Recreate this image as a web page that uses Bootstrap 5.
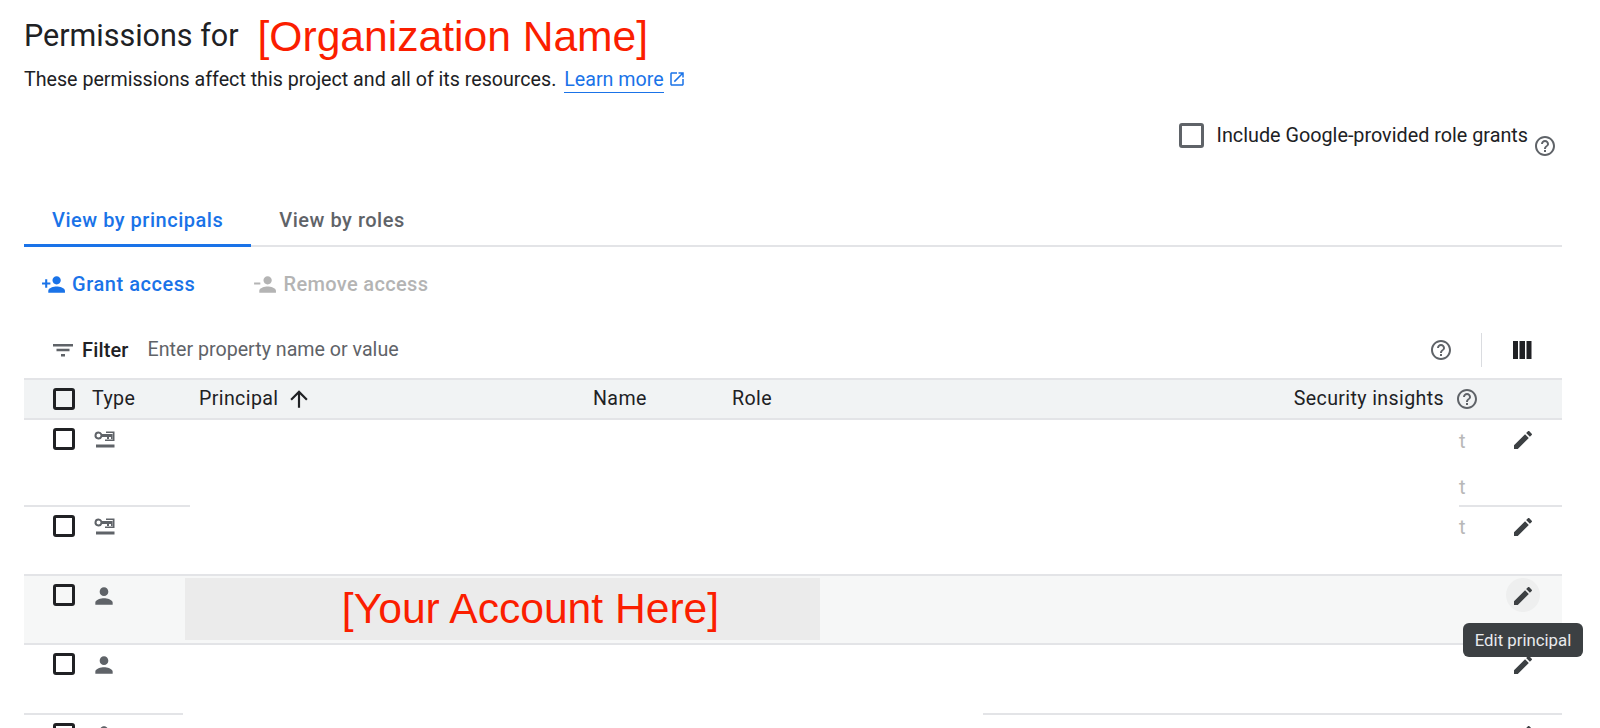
<!doctype html>
<html lang="en">
<head>
<meta charset="utf-8">
<title>Permissions</title>
<link href="https://cdn.jsdelivr.net/npm/bootstrap@5.3.0/dist/css/bootstrap.min.css" rel="stylesheet">
<style>
html,body{height:728px;overflow:hidden;background:#fff}
body{font-family:Roboto,"Liberation Sans",sans-serif;color:#202124;font-size:19.6px}
svg{display:block;fill:currentColor;flex:none}
.pg{margin:0 38px 0 24px;position:relative;height:728px;overflow:visible}
.head-row{padding-top:14px;height:56px;gap:19px}
.ttl{font-size:30.5px;line-height:42px;font-weight:400;margin:2px 0 0;color:#202124}
.redact{font-family:"Liberation Sans",Arial,sans-serif;color:#fb1e00;font-size:42.6px;line-height:42px}
.head-row .redact{margin-top:1px}
.sub{margin:12px 0 0;font-size:19.65px;line-height:24px;white-space:nowrap}
.sub a{color:#1a73e8;text-decoration:none;border-bottom:1px solid #1a73e8;margin-left:3px;display:inline-block;line-height:24px}
.sub svg{display:inline-block;width:18px;height:18px;color:#1a73e8;margin-left:4px;vertical-align:-2px}
.opt{margin-top:30px;height:35px;padding-right:5px}
.opt-text{line-height:25px;margin-left:13px;font-size:19.8px}
.box.form-check-input{width:22px;height:22px;margin:0;border:3px solid #202124;border-radius:3px;background-color:transparent;flex:none}
.box.big.form-check-input{width:25px;height:25px;border-color:#5f6368}
.hlp{width:24px;height:24px;color:#5f6368}
.opt .hlp{margin:11px 0 0 5px}
.tabbar{margin-top:38px;height:51px;border-bottom:2px solid #e3e4e7}
.tabbar .nav-link{padding:0 28px;height:51px;line-height:49px;color:#5f6368;font-size:20px;letter-spacing:.52px;font-weight:480;margin-bottom:-2px;border-bottom:3px solid transparent}
.tabbar .nav-link.active{color:#1a73e8;border-bottom-color:#1a73e8}
.acts{margin-top:17px;height:40px;padding-left:17px;gap:57px}
.act.btn{padding:0;border:0;font-size:20px;letter-spacing:.55px;font-weight:480;color:#1a73e8;gap:6px;display:flex;align-items:center}
.act.btn.off,.act.btn:disabled{color:#b4b4b4;opacity:1;letter-spacing:.35px}
.act svg{width:25px;height:25px}
.flt{margin-top:24px;margin-bottom:6px;height:44px;padding-left:27px;color:#202124}
.flt-l{font-weight:500;margin-left:7px;font-size:20px;letter-spacing:.15px}
.flt-in{border:0;outline:0;margin-left:19px;flex:1;font-size:19.65px;color:#5f6368;padding:0;background:transparent;font-family:inherit}
.flt-in::placeholder{color:#5f6368;opacity:1}
.flt .hlp{margin-right:28px}
.vr-l{width:1px;height:34px;background:#dadce0;margin-right:28px}
.cols{width:24px;height:24px;margin-right:28px}
.thead{height:42px;background:#f1f3f4;border-top:2px solid #e3e4e7;border-bottom:2px solid #e3e4e7;padding-left:29px;font-weight:430;font-size:19.6px;letter-spacing:.38px}
.thead .c{white-space:nowrap}
.c-type{margin-left:17px;width:107px}
.c-prin{width:394px}
.c-name{width:139px}
.c-role{flex:1}
.thead svg.arr{width:26px;height:26px;color:#202124;margin-left:8px}
.c-sec{margin-right:4px}
.thead .hlp{margin-right:83px;margin-left:7px}
.trow{display:flex;align-items:stretch;position:relative}
.tl{padding:8px 0 0 29px;display:flex;gap:17px;flex:none;width:166px}
.tm{flex:1;min-width:0}
.tr{width:103px;flex:none;position:relative}
.h87{height:87px}.h69{height:69px}.h70{height:70px}
.ln{border-bottom:2px solid #e3e4e7}
.pic{width:24px;height:24px;color:#5f6368}
.pic.pu{width:26px;height:26px;margin:-1px 0 0 -1px}
.tt{color:#b8b8b8;font-size:20px;line-height:22px;position:absolute;left:0}
.tt-a{top:10px}.tt-b{top:56px}.tt-c{top:9px}
.edit{width:24px;height:24px;color:#3c4043;position:absolute;left:52px;top:8px}
.edit.far{left:528px}
.hov{position:absolute;left:47px;top:2px;width:34px;height:34px;border-radius:50%;background:#eeefef}
.sel{background:#f6f7f7}
.acct{margin:2px 0 3px -5px;width:635px;height:62px;background:#ebebeb;display:flex;align-items:center;justify-content:center}
.acct .redact{margin:-2px 0 0 56px;white-space:nowrap}
.w159{width:159px}
.w579{width:579px}
.tipx{position:absolute;left:1439px;top:623px;width:120px;height:34px;border-radius:6px;background:#3c4043;color:#e8eaed;font-size:16.8px;line-height:34px;text-align:center;z-index:5}
</style>
</head>
<body>
<main class="pg">
  <div class="d-flex align-items-center head-row">
    <h1 class="ttl">Permissions for</h1>
    <span class="redact">[Organization Name]</span>
  </div>
  <p class="sub">These permissions affect this project and all of its resources. <a href="#">Learn more</a><svg viewBox="0 0 24 24"><path d="M19 19H5V5h7V3H5c-1.11 0-2 .9-2 2v14c0 1.1.89 2 2 2h14c1.1 0 2-.9 2-2v-7h-2v7zM14 3v2h3.59l-9.83 9.83 1.41 1.41L19 6.41V10h2V3h-7z"/></svg></p>

  <div class="d-flex justify-content-end align-items-start opt">
    <input class="form-check-input box big" type="checkbox" aria-label="Include Google-provided role grants">
    <span class="opt-text">Include Google-provided role grants</span>
    <svg class="hlp" viewBox="0 0 24 24"><use href="#h"/></svg>
  </div>

  <nav class="nav tabbar">
    <a class="nav-link active" href="#">View by principals</a>
    <a class="nav-link" href="#">View by roles</a>
  </nav>

  <div class="d-flex align-items-center acts">
    <button class="btn act" type="button"><svg viewBox="0 0 24 24"><path d="M15 12c2.21 0 4-1.79 4-4s-1.79-4-4-4-4 1.79-4 4 1.79 4 4 4zm-9-2V7H4v3H1v2h3v3h2v-3h3v-2H6zm9 4c-2.67 0-8 1.34-8 4v2h16v-2c0-2.66-5.33-4-8-4z"/></svg>Grant access</button>
    <button class="btn act off" type="button" disabled><svg viewBox="0 0 24 24"><path d="M15 12c2.21 0 4-1.79 4-4s-1.79-4-4-4-4 1.79-4 4 1.79 4 4 4zM2 10h6v2H2zm13 4c-2.67 0-8 1.34-8 4v2h16v-2c0-2.66-5.33-4-8-4z"/></svg>Remove access</button>
  </div>

  <div class="d-flex align-items-center flt">
    <svg width="24" height="24" viewBox="0 0 24 24"><path fill="#5f6368" d="M10 18.500h4v-2.500h-4v2.500zM2 6v2.500h20V6H2zm3.500 7.200h13v-2.500h-13v2.500z"/></svg>
    <span class="flt-l">Filter</span>
    <input class="flt-in" type="text" placeholder="Enter property name or value" aria-label="Filter">
    <svg class="hlp" viewBox="0 0 24 24"><use href="#h"/></svg>
    <span class="vr-l"></span>
    <svg class="cols" viewBox="0 0 24 24"><path d="M3 3h5v18H3zM9.500 3H15v18H9.500zM16.500 3h5v18h-5z"/></svg>
  </div>

  <div class="d-flex align-items-center thead">
    <input class="form-check-input box" type="checkbox" aria-label="Select all">
    <span class="c c-type">Type</span>
    <span class="c c-prin d-flex align-items-center">Principal<svg class="arr" viewBox="0 0 24 24"><path d="M4 12l1.41 1.41L11 7.830V20h2V7.830l5.580 5.590L20 12l-8-8-8 8z"/></svg></span>
    <span class="c c-name">Name</span>
    <span class="c c-role">Role</span>
    <span class="c c-sec">Security insights</span>
    <svg class="hlp" viewBox="0 0 24 24"><use href="#h"/></svg>
  </div>

  <div class="trow h87">
    <div class="tl ln"><input class="form-check-input box" type="checkbox" aria-label="Select row"><svg class="pic" viewBox="0 0 24 24"><use href="#k"/></svg></div>
    <div class="tm"></div>
    <div class="tr ln"><span class="tt tt-a">t</span><span class="tt tt-b">t</span><svg class="edit" viewBox="0 0 24 24"><use href="#p"/></svg></div>
  </div>
  <div class="trow h69 ln">
    <div class="tl"><input class="form-check-input box" type="checkbox" aria-label="Select row"><svg class="pic" viewBox="0 0 24 24"><use href="#k"/></svg></div>
    <div class="tm"></div>
    <div class="tr"><span class="tt tt-c">t</span><svg class="edit" viewBox="0 0 24 24"><use href="#p"/></svg></div>
  </div>
  <div class="trow h69 ln sel">
    <div class="tl"><input class="form-check-input box" type="checkbox" aria-label="Select row"><svg class="pic pu" viewBox="0 0 24 24"><use href="#u"/></svg></div>
    <div class="tm"><div class="acct"><span class="redact">[Your Account Here]</span></div></div>
    <div class="tr"><span class="hov"></span><svg class="edit" viewBox="0 0 24 24"><use href="#p"/></svg></div>
  </div>
  <div class="trow h70">
    <div class="tl ln w159"><input class="form-check-input box" type="checkbox" aria-label="Select row"><svg class="pic pu" viewBox="0 0 24 24"><use href="#u"/></svg></div>
    <div class="tm"></div>
    <div class="tr ln w579"><svg class="edit far" viewBox="0 0 24 24"><use href="#p"/></svg></div>
  </div>
  <div class="trow h70">
    <div class="tl"><input class="form-check-input box" type="checkbox" aria-label="Select row"><svg class="pic pu" viewBox="0 0 24 24"><use href="#u"/></svg></div>
    <div class="tm"></div>
    <div class="tr"><svg class="edit" viewBox="0 0 24 24"><use href="#p"/></svg></div>
  </div>
  <div class="tipx" role="tooltip">Edit principal</div>
</main>
<svg width="0" height="0" class="position-absolute" aria-hidden="true"><defs>
  <symbol id="h" viewBox="0 0 24 24"><path d="M11 18h2v-2h-2v2zm1-16C6.480 2 2 6.480 2 12s4.480 10 10 10 10-4.480 10-10S17.520 2 12 2zm0 18c-4.410 0-8-3.590-8-8s3.590-8 8-8 8 3.590 8 8-3.590 8-8 8zm0-14c-2.210 0-4 1.790-4 4h2c0-1.100.9-2 2-2s2 .9 2 2c0 2-3 1.750-3 5h2c0-2.250 3-2.500 3-5 0-2.210-1.790-4-4-4z"/></symbol>
  <symbol id="p" viewBox="0 0 24 24"><path d="M3 17.250V21h3.750L17.810 9.940l-3.750-3.750L3 17.250zM20.710 7.040c.39-.39.39-1.020 0-1.410l-2.340-2.340c-.39-.39-1.020-.39-1.410 0l-1.830 1.830 3.750 3.750 1.830-1.830z"/></symbol>
  <symbol id="u" viewBox="0 0 24 24"><path d="M12 12c2.210 0 4-1.790 4-4s-1.790-4-4-4-4 1.790-4 4 1.790 4 4 4zm0 2c-2.670 0-8 1.340-8 4v2h16v-2c0-2.660-5.330-4-8-4z"/></symbol>
  <symbol id="k" viewBox="0 0 24 24"><path fill-rule="evenodd" d="M6.500 3.500a4 4 0 1 0 3.700 5.500H15v2h2V9h2v2h1.500V6h-2.500V6H10.200A4 4 0 0 0 6.500 3.500zm0 2a2 2 0 1 1 0 4 2 2 0 0 1 0-4zM14 3.500h8.500V13H13v-1.600h7.800V5.100H14zM4 16.500h18.500v3H4z"/></symbol>
</defs></svg>
<script src="https://cdn.jsdelivr.net/npm/bootstrap@5.3.0/dist/js/bootstrap.bundle.min.js"></script>
</body>
</html>
